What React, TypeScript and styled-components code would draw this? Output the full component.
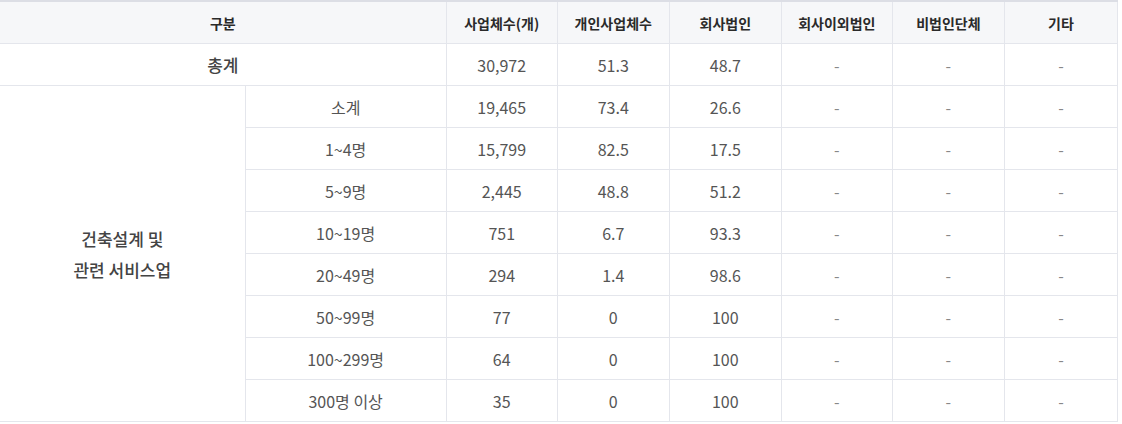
import styled, { createGlobalStyle } from "styled-components";

const GlobalStyle = createGlobalStyle`
  html, body {
    margin: 0;
    padding: 0;
    background: #fff;
  }
  body {
    font-family: "Noto Sans CJK KR", "Noto Sans", sans-serif;
  }
`

const COLS = [245, 201, 111, 112, 112, 111, 112, 113]

const HEADERS = ["구분", "사업체수(개)", "개인사업체수", "회사법인", "회사이외법인", "비법인단체", "기타"]

const total = ["30,972", "51.3", "48.7", "-", "-", "-"]

const rows: [string, string[]][] = [
  ["소계", ["19,465", "73.4", "26.6", "-", "-", "-"]],
  ["1~4명", ["15,799", "82.5", "17.5", "-", "-", "-"]],
  ["5~9명", ["2,445", "48.8", "51.2", "-", "-", "-"]],
  ["10~19명", ["751", "6.7", "93.3", "-", "-", "-"]],
  ["20~49명", ["294", "1.4", "98.6", "-", "-", "-"]],
  ["50~99명", ["77", "0", "100", "-", "-", "-"]],
  ["100~299명", ["64", "0", "100", "-", "-", "-"]],
  ["300명 이상", ["35", "0", "100", "-", "-", "-"]],
]

const App = () => {
  return <Wrap>
    <GlobalStyle />
    <Table>
      <colgroup>
        {COLS.map((w, i) => <col key={i} style={{ width: w }} />)}
      </colgroup>
      <thead>
        <tr>
          {HEADERS.map((h, i) => (
            <Th key={h} colSpan={i === 0 ? 2 : 1}>{h}</Th>
          ))}
        </tr>
      </thead>
      <tbody>
        <tr>
          <Td colSpan={2} $strong>총계</Td>
          {total.map((v, i) => <Td key={i} $dash={v === "-"}>{v}</Td>)}
        </tr>
        {rows.map(([label, vals], r) => (
          <tr key={label}>
            {r === 0 && (
              <GroupCell rowSpan={rows.length}>
                건축설계 및<br />관련 서비스업
              </GroupCell>
            )}
            <Td>{label}</Td>
            {vals.map((v, i) => <Td key={i} $dash={v === "-"}>{v}</Td>)}
          </tr>
        ))}
      </tbody>
    </Table>
  </Wrap>
}

export default App

const Wrap = styled.div`
  width: 1122px;
  overflow: hidden;
`

const Table = styled.table`
  width: 1118px;
  table-layout: fixed;
  border-collapse: collapse;
  border-top: 2px solid #dcdee5;
`

const Th = styled.th`
  height: 41px;
  padding: 0;
  background: #f6f7f9;
  border-right: 1px solid #e4e6ec;
  border-bottom: 1px solid #e4e6ec;
  font-size: 14px;
  font-weight: 700;
  color: #2a2a2a;
  text-align: center;
  vertical-align: middle;
`

const Td = styled.td<{ $strong?: boolean; $dash?: boolean }>`
  height: 41px;
  padding: 0;
  border-right: 1px solid #e4e6ec;
  border-bottom: 1px solid #e4e6ec;
  font-size: ${p => (p.$strong ? "17px" : "16px")};
  font-weight: ${p => (p.$strong ? 500 : 400)};
  color: ${p => (p.$dash ? "#888" : p.$strong ? "#444" : "#555")};
  text-align: center;
  vertical-align: middle;
`

const GroupCell = styled.td`
  padding: 0;
  border-right: 1px solid #e4e6ec;
  border-bottom: 1px solid #e4e6ec;
  font-size: 17px;
  font-weight: 500;
  line-height: 31px;
  color: #444;
  text-align: center;
  vertical-align: middle;
`
